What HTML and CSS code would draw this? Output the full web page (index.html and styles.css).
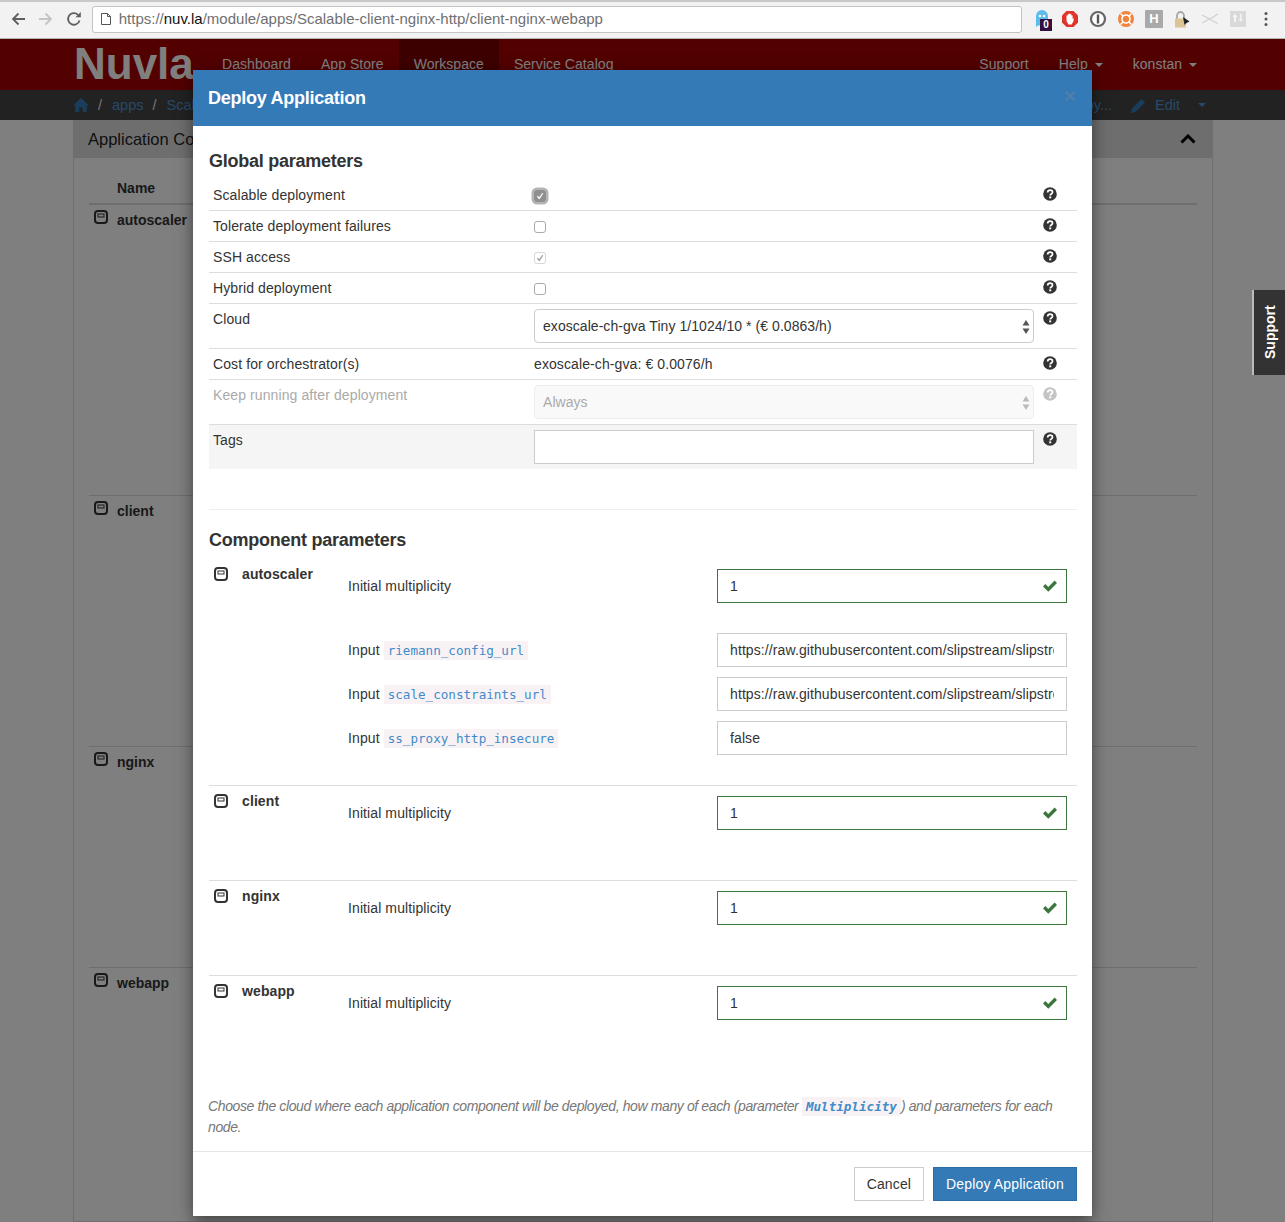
FILE: index.html
```html
<!doctype html>
<html>

<head>
    <title>Deploy Application</title>
    <link rel="stylesheet" href="styles.css">
</head>

<body>
    <svg class="defs" width="0" height="0">
        <symbol id="help" viewBox="0 0 14 14">
            <circle cx="7" cy="7" r="6.8" fill="currentColor" />
            <path d="M4.6 5.5C4.7 4 5.7 3.2 7.1 3.2c1.4 0 2.4.8 2.4 2 0 1.9-2.3 1.6-2.3 3.2" fill="none" stroke="#fff" stroke-width="1.7" />
            <rect x="6.2" y="9.4" width="2" height="1.9" fill="#fff" />
        </symbol>
        <symbol id="box" viewBox="0 0 14 14">
            <rect x="1" y="1" width="12" height="12" rx="3" fill="none" stroke="currentColor" stroke-width="2" />
            <rect x="4" y="4" width="6" height="3" fill="none" stroke="currentColor" stroke-width="1" />
        </symbol>
        <symbol id="ok" viewBox="0 0 16 14">
            <path d="M1 7.5l2.4-2.4 2.9 2.9L12.600 1.500 15 3.900 6.300 12.800z" fill="currentColor" />
        </symbol>
        <symbol id="tick" viewBox="0 0 12 12">
            <path d="M2.800 6.200l2.300 2.700 4.200-6.200" fill="none" stroke="currentColor" stroke-width="1.500" />
        </symbol>
        <symbol id="updown" viewBox="0 0 8 14">
            <path d="M4 0l3.500 5.500h-7zM4 14L.5 8.500h7z" fill="currentColor" />
        </symbol>
    </svg>

    <!-- Browser toolbar -->
    <div class="chrome">
        <div class="nav-buttons">
            <svg width="16" height="16" viewBox="0 0 16 16"><path d="M15 8H3M8.500 2.500L3 8l5.500 5.500" fill="none" stroke="#5f5f5f" stroke-width="1.800" /></svg>
            <svg width="16" height="16" viewBox="0 0 16 16"><path d="M1 8h12M7.500 2.500L13 8l-5.500 5.500" fill="none" stroke="#c4c4c4" stroke-width="1.800" /></svg>
            <svg width="16" height="16" viewBox="0 0 16 16"><path d="M13.500 9.500A5.800 5.800 0 1 1 12 3.800" fill="none" stroke="#5f5f5f" stroke-width="1.800" /><path d="M9.500 6.200h5.300V.9z" fill="#5f5f5f" /></svg>
        </div>
        <div class="address">
            <svg width="10" height="12" viewBox="0 0 10 12"><path d="M.5.500h6l3 3v8h-9zM6.500.500v3h3" fill="#fff" stroke="#555" /></svg>
            <span class="url">https://<b>nuv.la</b>/module/apps/Scalable-client-nginx-http/client-nginx-webapp</span>
        </div>
        <div class="extensions">
            <span class="ext">
                <svg width="14" height="18" viewBox="0 0 14 18"><path d="M1 17V6a6 6 0 0 1 12 0v11l-3-2-3 2-3-2z" fill="#5cbdec" /><circle cx="5" cy="6" r="1.300" fill="#fff" /><circle cx="9" cy="6" r="1.300" fill="#fff" /></svg>
                <i class="badge">0</i>
            </span>
            <svg width="18" height="18" viewBox="0 0 18 18"><path d="M5.500 1h7L17 5.500v7L12.500 17h-7L1 12.500v-7z" fill="#e0352b" /><path d="M5.500 8.500V5.500h1.200V4.200h1.200V3.500h1.300v.7h1.200v1.300h1.200V9l1-1v3l-2 3.500H7.500L5.500 11z" fill="#fff" /></svg>
            <svg width="18" height="18" viewBox="0 0 18 18"><circle cx="9" cy="9" r="7" fill="#fff" stroke="#666" stroke-width="2.200" /><rect x="7.800" y="4.500" width="2.400" height="9" fill="#555" /></svg>
            <svg width="18" height="18" viewBox="0 0 18 18"><circle cx="9" cy="9" r="8" fill="#f0843c" /><circle cx="9" cy="9" r="4" fill="#f0843c" stroke="#fff" stroke-width="1.600" /><path d="M3.500 3.500l3 3M14.500 3.500l-3 3M3.500 14.500l3-3M14.500 14.500l-3-3" stroke="#fff" stroke-width="1.500" /></svg>
            <span class="ext-h">H</span>
            <svg width="18" height="18" viewBox="0 0 18 18"><path d="M4 9V5.500a3.500 3.500 0 0 1 7 0V9" fill="none" stroke="#a8a8a8" stroke-width="1.800" /><rect x="2" y="8.500" width="11" height="9" fill="#dcc495" /><path d="M10 7l6.500 4.500-3 1.500-2 2z" fill="#222" /></svg>
            <svg width="18" height="18" viewBox="0 0 18 18"><path d="M1 5l12 6.500M1 13L13 6.500M13 6.500L17 4M13 11.500L17 13.500" fill="none" stroke="#cfcfcf" stroke-width="1.200" /></svg>
            <svg width="18" height="18" viewBox="0 0 18 18"><rect x="1" y="1" width="16" height="16" fill="#d9d9d9" /><path d="M6 3.500L3.500 7H5v5h2V7h1.500zM11 4h1.500v5H14l-2.200 3-2.200-3H11z" fill="#f4f4f4" /></svg>
            <svg width="18" height="18" viewBox="0 0 18 18"><circle cx="9" cy="3.500" r="1.500" fill="#555" /><circle cx="9" cy="9" r="1.500" fill="#555" /><circle cx="9" cy="14.500" r="1.500" fill="#555" /></svg>
        </div>
    </div>

    <div class="page">
        <div class="navbar">
            <div class="logo">Nuvla</div>
            <a class="nav-link">Dashboard</a>
            <a class="nav-link">App Store</a>
            <a class="nav-link active">Workspace</a>
            <a class="nav-link">Service Catalog</a>
            <div class="nav-right">
                <a class="nav-link">Support</a>
                <a class="nav-link">Help <i class="caret"></i></a>
                <a class="nav-link">konstan <i class="caret"></i></a>
            </div>
        </div>

        <div class="crumbs">
            <svg width="16" height="14" viewBox="0 0 16 14"><path d="M8 0l8 7.500h-2.200V14H9.700V9.500H6.300V14H2.200V7.500H0z" fill="#337ab7" /></svg>
            <span class="sep">/</span>
            <a>apps</a>
            <span class="sep">/</span>
            <a>Scalable-client-nginx-http</a>
            <div class="crumb-actions">
                <a>Deploy...</a>
                <svg width="15" height="15" viewBox="0 0 15 15"><path d="M0 15l1-4.500L10.500 1 14 4.500 4.500 14z" fill="#337ab7" /></svg>
                <a>Edit</a>
                <i class="caret"></i>
            </div>
        </div>

        <div class="panel">
            <div class="panel-heading">
                <span>Application Components</span>
                <svg width="16" height="10" viewBox="0 0 16 10"><path d="M1.500 8.500L8 2l6.500 6.500" fill="none" stroke="#000" stroke-width="3" /></svg>
            </div>
            <div class="panel-body">
                <div class="comp-head">Name</div>
                <div class="comp-row row-a"><svg class="icon-box"><use href="#box" /></svg>autoscaler</div>
                <div class="comp-row row-b"><svg class="icon-box"><use href="#box" /></svg>client</div>
                <div class="comp-row row-c"><svg class="icon-box"><use href="#box" /></svg>nginx</div>
                <div class="comp-row row-d"><svg class="icon-box"><use href="#box" /></svg>webapp</div>
            </div>
        </div>
    </div>

    <div class="backdrop"></div>

    <div class="support-tab">Support</div>

    <!-- Deploy modal -->
    <div class="modal">
        <div class="modal-header">
            <h4>Deploy Application</h4>
            <span class="close">&times;</span>
        </div>

        <div class="modal-body">
            <h4 class="section-title">Global parameters</h4>
            <div class="params">
                <div class="param">
                    <div>Scalable deployment</div>
                    <div><span class="check focused"><svg><use href="#tick" /></svg></span></div>
                    <svg class="help"><use href="#help" /></svg>
                </div>
                <div class="param">
                    <div>Tolerate deployment failures</div>
                    <div><span class="check"></span></div>
                    <svg class="help"><use href="#help" /></svg>
                </div>
                <div class="param">
                    <div>SSH access</div>
                    <div><span class="check disabled"><svg><use href="#tick" /></svg></span></div>
                    <svg class="help"><use href="#help" /></svg>
                </div>
                <div class="param">
                    <div>Hybrid deployment</div>
                    <div><span class="check"></span></div>
                    <svg class="help"><use href="#help" /></svg>
                </div>
                <div class="param">
                    <div>Cloud</div>
                    <div class="select">exoscale-ch-gva Tiny 1/1024/10 * (€ 0.0863/h)<svg class="updown"><use href="#updown" /></svg></div>
                    <svg class="help"><use href="#help" /></svg>
                </div>
                <div class="param">
                    <div>Cost for orchestrator(s)</div>
                    <div>exoscale-ch-gva: € 0.0076/h</div>
                    <svg class="help"><use href="#help" /></svg>
                </div>
                <div class="param param-disabled">
                    <div>Keep running after deployment</div>
                    <div class="select">Always<svg class="updown"><use href="#updown" /></svg></div>
                    <svg class="help"><use href="#help" /></svg>
                </div>
                <div class="param param-tags">
                    <div>Tags</div>
                    <input class="field" type="text">
                    <svg class="help"><use href="#help" /></svg>
                </div>
            </div>

            <hr>

            <h4 class="section-title">Component parameters</h4>

            <div class="component">
                <svg class="icon-box"><use href="#box" /></svg>
                <div class="comp-name">autoscaler</div>
                <div class="comp-fields">
                    <div class="comp-field multiplicity">
                        <label>Initial multiplicity</label>
                        <div class="valid"><input class="field" type="text" value="1"><svg class="ok"><use href="#ok" /></svg></div>
                    </div>
                    <div class="comp-field">
                        <label>Input <code>riemann_config_url</code></label>
                        <input class="field" type="text" value="https://raw.githubusercontent.com/slipstream/slipstream/master/riemann.config">
                    </div>
                    <div class="comp-field">
                        <label>Input <code>scale_constraints_url</code></label>
                        <input class="field" type="text" value="https://raw.githubusercontent.com/slipstream/slipstream/master/scale.edn">
                    </div>
                    <div class="comp-field">
                        <label>Input <code>ss_proxy_http_insecure</code></label>
                        <input class="field" type="text" value="false">
                    </div>
                </div>
            </div>

            <div class="component">
                <svg class="icon-box"><use href="#box" /></svg>
                <div class="comp-name">client</div>
                <div class="comp-fields">
                    <div class="comp-field multiplicity">
                        <label>Initial multiplicity</label>
                        <div class="valid"><input class="field" type="text" value="1"><svg class="ok"><use href="#ok" /></svg></div>
                    </div>
                </div>
            </div>

            <div class="component">
                <svg class="icon-box"><use href="#box" /></svg>
                <div class="comp-name">nginx</div>
                <div class="comp-fields">
                    <div class="comp-field multiplicity">
                        <label>Initial multiplicity</label>
                        <div class="valid"><input class="field" type="text" value="1"><svg class="ok"><use href="#ok" /></svg></div>
                    </div>
                </div>
            </div>

            <div class="component">
                <svg class="icon-box"><use href="#box" /></svg>
                <div class="comp-name">webapp</div>
                <div class="comp-fields">
                    <div class="comp-field multiplicity">
                        <label>Initial multiplicity</label>
                        <div class="valid"><input class="field" type="text" value="1"><svg class="ok"><use href="#ok" /></svg></div>
                    </div>
                </div>
            </div>

            <p class="note">Choose the cloud where each application component will be deployed, how many of each (parameter <code>Multiplicity</code>) and parameters for each node.</p>
        </div>

        <div class="modal-footer">
            <button class="btn">Cancel</button>
            <button class="btn btn-primary">Deploy Application</button>
        </div>
    </div>
</body>
</html>
```

FILE: styles.css
```css
* {
    box-sizing: border-box;
}

html,
body {
    margin: 0;
    height: 1222px;
    overflow: hidden;
}

body {
    position: relative;
    background: white;
    color: #333;
    font-family: "Liberation Sans", Arial, sans-serif;
    font-size: 14px;
    line-height: 20px;
}

.defs {
    position: absolute;
}

/* Browser toolbar */
.chrome {
    height: 39px;
    display: flex;
    align-items: center;
    background: #f2f2f2;
    border-top: 2px solid #c8c8c8;
    border-bottom: 1px solid #b5b5b5;
    padding: 0 10px 2px;
}

.nav-buttons {
    width: 82px;
    display: flex;
    gap: 12px;
}

.address {
    width: 933px;
    height: 27px;
    display: flex;
    align-items: center;
    gap: 8px;
    padding-left: 8px;
    background: white;
    border: 1px solid #c4c4c4;
    border-radius: 3px;
    color: #707070;
    font-size: 15px;
}

.url b {
    font-weight: normal;
    color: #111;
}

.extensions {
    display: flex;
    align-items: center;
    gap: 10px;
    margin-left: 11px;
}

.ext {
    position: relative;
    display: flex;
    justify-content: center;
    width: 18px;
}

.badge {
    position: absolute;
    left: 7px;
    top: 9px;
    width: 12px;
    height: 12px;
    background: #33103f;
    color: white;
    font: bold 10px/12px "Liberation Sans", sans-serif;
    text-align: center;
}

.ext-h {
    width: 18px;
    height: 18px;
    border-radius: 1px;
    background: #a9a9a9;
    color: white;
    font-size: 13px;
    font-weight: bold;
    line-height: 18px;
    text-align: center;
}

/* Page behind the modal */
.navbar {
    height: 51px;
    display: flex;
    align-items: stretch;
    padding-left: 74px;
    background: #a40000;
    color: white;
    letter-spacing: 0.05px;
}

.logo {
    width: 133px;
    font-size: 44px;
    font-weight: bold;
    line-height: 49px;
    letter-spacing: 0;
    color: #fff;
}

.nav-link {
    padding: 15px 15px 0;
    color: white;
}

.nav-link.active {
    background: #7a0000;
}

.nav-right {
    display: flex;
    margin-left: auto;
    padding-right: 73px;
}

.caret {
    display: inline-block;
    margin-left: 3px;
    vertical-align: middle;
    border-top: 4px solid;
    border-left: 4px solid transparent;
    border-right: 4px solid transparent;
}

.crumbs {
    height: 30px;
    display: flex;
    align-items: center;
    padding-left: 73px;
    background: #444;
    font-size: 14.500px;
    color: #e5e5e5;
}

.crumbs a {
    color: #4f93cf;
}

.crumbs .sep {
    margin: 0 10px 0 9px;
}

.crumb-actions {
    display: flex;
    align-items: center;
    margin-left: auto;
    padding-right: 79px;
}

.crumb-actions svg {
    margin: 0 9px 0 19px;
}

.crumb-actions .caret {
    margin-left: 18px;
    color: #4f93cf;
}

.panel {
    margin: 0 72px 0 73px;
    height: 1102px;
    border: 1px solid #ddd;
    border-top: 0;
}

.panel-heading {
    height: 38px;
    display: flex;
    align-items: center;
    justify-content: space-between;
    padding: 0 16px 0 14px;
    background: #ddd;
    font-size: 16.500px;
    color: #222;
}

.panel-body {
    padding: 0 15px;
}

.comp-head {
    height: 47px;
    padding: 20px 0 0 28px;
    border-bottom: 2px solid #ddd;
    font-weight: bold;
}

.comp-row {
    display: flex;
    gap: 9px;
    padding: 5px 0 0 5px;
    border-bottom: 1px solid #ddd;
    font-weight: bold;
}

.row-a {
    height: 291px;
}

.row-b {
    height: 251px;
}

.row-c {
    height: 221px;
}

.row-d {
    height: 200px;
    border-bottom: 0;
}

.icon-box {
    width: 14px;
    height: 14px;
    flex: none;
    color: #333;
}

.backdrop {
    position: absolute;
    top: 39px;
    left: 0;
    right: 0;
    bottom: 0;
    background: rgba(0, 0, 0, 0.5);
}

.support-tab {
    position: absolute;
    top: 290px;
    right: 0;
    width: 33px;
    height: 85px;
    display: flex;
    align-items: center;
    justify-content: center;
    background: #333;
    border-right: 2px solid #bbb;
    color: white;
    font-weight: bold;
    writing-mode: vertical-rl;
    transform: rotate(180deg);
}

/* Modal */
.modal {
    position: absolute;
    top: 70px;
    left: 193px;
    width: 899px;
    height: 1146px;
    display: flex;
    flex-direction: column;
    background: white;
    box-shadow: 0 5px 15px rgba(0, 0, 0, 0.5);
}

.modal-header {
    height: 56px;
    display: flex;
    align-items: center;
    justify-content: space-between;
    padding: 0 16px 0 15px;
    background: #337ab7;
    color: white;
}

.modal-header h4 {
    margin: 0;
    font-size: 18px;
    letter-spacing: -0.25px;
}

.close {
    margin-top: -4px;
    font-size: 21px;
    font-weight: bold;
    color: #4f7fa9;
}

.modal-body {
    flex: 1;
    padding: 25px 15px 0 16px;
    letter-spacing: 0.1px;
}

.section-title {
    margin: 0 0 9px;
    font-size: 18px;
    line-height: 20px;
    letter-spacing: -0.25px;
}

hr {
    margin: 40px 0 20px;
    border: 0;
    border-top: 1px solid #eee;
}

/* Global parameters table */
.param {
    display: grid;
    grid-template-columns: 320px 510px 37px;
    border-bottom: 1px solid #ddd;
}

.param > div {
    padding: 5px 5px 5px 4px;
}

.param > div:nth-child(2) {
    padding-left: 5px;
}

.param-tags {
    background: #f5f5f5;
    border-bottom: 0;
}

.param-disabled {
    color: #aaa;
}

.help {
    width: 14px;
    height: 14px;
    margin: 7px 0 0 4px;
    color: #333;
}

.param-disabled .help {
    color: #c4c4c4;
}

.check {
    display: block;
    width: 12px;
    height: 12px;
    margin: 5px 0 0;
    background: white;
    border: 1px solid #aaa;
    border-radius: 3px;
}

.check svg {
    display: block;
    width: 10px;
    height: 10px;
}

.check.focused {
    background: #8f8f8f;
    border-color: #8f8f8f;
    color: white;
    box-shadow: 0 0 0 2.500px #b4b4b4;
}

.check.disabled {
    border-color: #d8d8d8;
    color: #999;
}

.param > div.select {
    position: relative;
    width: 500px;
    height: 34px;
    margin: 5px;
    padding: 6px 8px;
    background: white;
    border: 1px solid #ccc;
    border-radius: 4px;
    letter-spacing: 0.05px;
}

.param-disabled > div.select {
    background: #f9f9f9;
    border-color: #eee;
}

.updown {
    position: absolute;
    top: 10px;
    right: 3px;
    width: 8px;
    height: 14px;
    color: #555;
}

.param-disabled .updown {
    color: #bbb;
}

.field {
    display: block;
    width: 350px;
    height: 34px;
    padding: 6px 12px;
    background: white;
    border: 1px solid #ccc;
    color: #333;
    font: 14px/20px "Liberation Sans", Arial, sans-serif;
    letter-spacing: 0.1px;
    outline: none;
}

.param-tags .field {
    width: 500px;
    margin: 5px;
}

/* Component parameters */
.component {
    display: grid;
    grid-template-columns: 28px 106px 1fr;
    padding: 10px 10px 20px 5px;
    border-bottom: 1px solid #ddd;
}

.component:last-of-type {
    border-bottom: 0;
}

.component .icon-box {
    margin-top: -2px;
}

.comp-name {
    margin-top: -5px;
    font-weight: bold;
}

.comp-field {
    display: flex;
    align-items: center;
    justify-content: space-between;
    margin-bottom: 10px;
}

.comp-field.multiplicity {
    margin-bottom: 30px;
}

.valid {
    position: relative;
}

.valid .field {
    border-color: #3c763d;
}

.ok {
    position: absolute;
    top: 10px;
    right: 9px;
    width: 16px;
    height: 14px;
    color: #3c763d;
}

code {
    padding: 2px 4px;
    background: #f9f2f4;
    color: #428bca;
    font-family: "DejaVu Sans Mono", monospace;
    font-size: 12.600px;
    letter-spacing: 0;
}

.note {
    margin: 26px 0 0 -1px;
    color: #777;
    font-style: italic;
    letter-spacing: -0.38px;
}

.note code {
    font-weight: bold;
}

.modal-footer {
    display: flex;
    justify-content: flex-end;
    gap: 9px;
    padding: 15px;
    border-top: 1px solid #e5e5e5;
}

.btn {
    height: 34px;
    padding: 6px 12px;
    background: white;
    border: 1px solid #ccc;
    color: #333;
    font: 14px/20px "Liberation Sans", Arial, sans-serif;
    letter-spacing: 0.15px;
}

.btn-primary {
    background: #337ab7;
    border-color: #2e6da4;
    color: white;
}
```
